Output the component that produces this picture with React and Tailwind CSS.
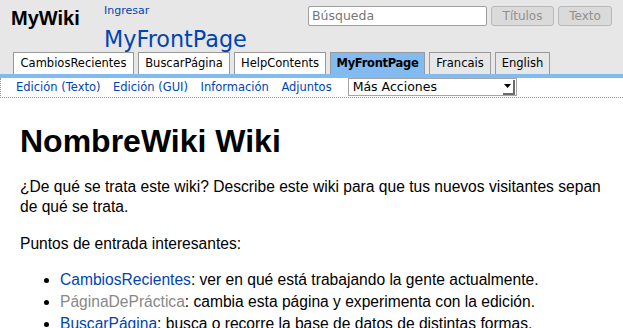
export default function App() {
  const tabs = [
    { label: "CambiosRecientes", w: "w-[121px]" },
    { label: "BuscarPágina", w: "w-[92px]" },
    { label: "HelpContents", w: "w-[92px]" },
    { label: "MyFrontPage", w: "w-[95px]", active: true },
    { label: "Francais", w: "w-[62px]", gray: true },
    { label: "English", w: "w-[55px]", gray: true },
  ];
  const edits = ["Edición (Texto)", "Edición (GUI)", "Información", "Adjuntos"];
  return (
    <div className="w-[623px] h-[328px] overflow-hidden bg-white">
      <div className="bg-[#e7e7e7] font-['DejaVu_Sans',sans-serif]">
        <div className="flex h-[52px] items-start">
          <div className="ml-[11px] mt-[8px] w-[93px] font-['Liberation_Sans',sans-serif] text-[20px] font-bold leading-[20px] text-black">
            MyWiki
          </div>
          <div className="flex flex-col">
            <span className="mt-[4px] text-[11px] leading-[13px] text-[#0044b3]">Ingresar</span>
            <span className="mt-[9px] text-[22.3px] leading-[26px] text-[#0044b3]">MyFrontPage</span>
          </div>
          <div className="ml-auto mr-[11px] mt-[6px] flex gap-[4px]">
            <div className="flex h-[20px] w-[179px] items-center rounded-[2px] border border-[#a0a0a0] bg-white pl-[3px] text-[12.5px] text-[#777]">
              Búsqueda
            </div>
            <div className="flex h-[20px] w-[63px] items-center justify-center rounded-[3px] border border-[#b8b8b8] bg-[#dadada] text-[12px] text-[#909090]">
              Títulos
            </div>
            <div className="flex h-[20px] w-[54px] items-center justify-center rounded-[3px] border border-[#b8b8b8] bg-[#dadada] text-[12px] text-[#909090]">
              Texto
            </div>
          </div>
        </div>
        <div className="flex h-[22px] items-end gap-[4px] pl-[13px]">
          {tabs.map((t) => (
            <div
              key={t.label}
              className={
                "h-[22px] whitespace-nowrap border border-b-0 border-[#999] text-center text-[11.5px] leading-[21px] text-black " +
                t.w +
                " " +
                (t.active ? "bg-[#81bbf2] font-bold tracking-[-0.3px]" : t.gray ? "bg-[#e7e7e7]" : "bg-white")
              }
            >
              {t.label}
            </div>
          ))}
        </div>
      </div>
      <div className="h-[4px] bg-[#81bbf2]" />
      <div className="flex h-[20px] items-start border-b border-l border-dotted border-[#999] bg-white pl-[15px] font-['DejaVu_Sans',sans-serif]">
        <div className="flex gap-[12.5px] text-[11.5px] leading-[19px] text-[#0044b3]">
          {edits.map((e) => (
            <span key={e}>{e}</span>
          ))}
        </div>
        <div className="ml-[16px] flex h-[18px] w-[169px] items-center justify-between border border-[#a5a5a5] bg-white pl-[4px] text-[12.5px] leading-[16px] text-black">
          <span>Más Acciones</span>
          <span className="mr-[1px] flex h-[15px] w-[12px] items-center justify-center border-b-2 border-r-2 border-[#6b6b6b] bg-white">
            <svg width="7" height="4" viewBox="0 0 7 4">
              <path d="M0 0H7L3.5 4Z" fill="#000" />
            </svg>
          </span>
        </div>
      </div>
      <div className="px-[20px] font-['Liberation_Sans',sans-serif] text-black">
        <h1 className="mt-[25px] text-[32px] font-bold leading-[36px]">NombreWiki Wiki</h1>
        <p className="mt-[18px] text-[15.6px] leading-[19.5px]">
          ¿De qué se trata este wiki? Describe este wiki para que tus nuevos visitantes sepan de qué se trata.
        </p>
        <p className="mt-[18px] text-[15.6px] leading-[19.5px]">Puntos de entrada interesantes:</p>
        <ul className="mt-[15px] list-disc pl-[40px] text-[15.6px] leading-[22px]">
          <li>
            <span className="text-[#0044b3]">CambiosRecientes</span>: ver en qué está trabajando la gente actualmente.
          </li>
          <li>
            <span className="text-[#888]">PáginaDePráctica</span>: cambia esta página y experimenta con la edición.
          </li>
          <li>
            <span className="text-[#0044b3] underline">BuscarPágina</span>: busca o recorre la base de datos de distintas formas.
          </li>
        </ul>
      </div>
    </div>
  );
}
